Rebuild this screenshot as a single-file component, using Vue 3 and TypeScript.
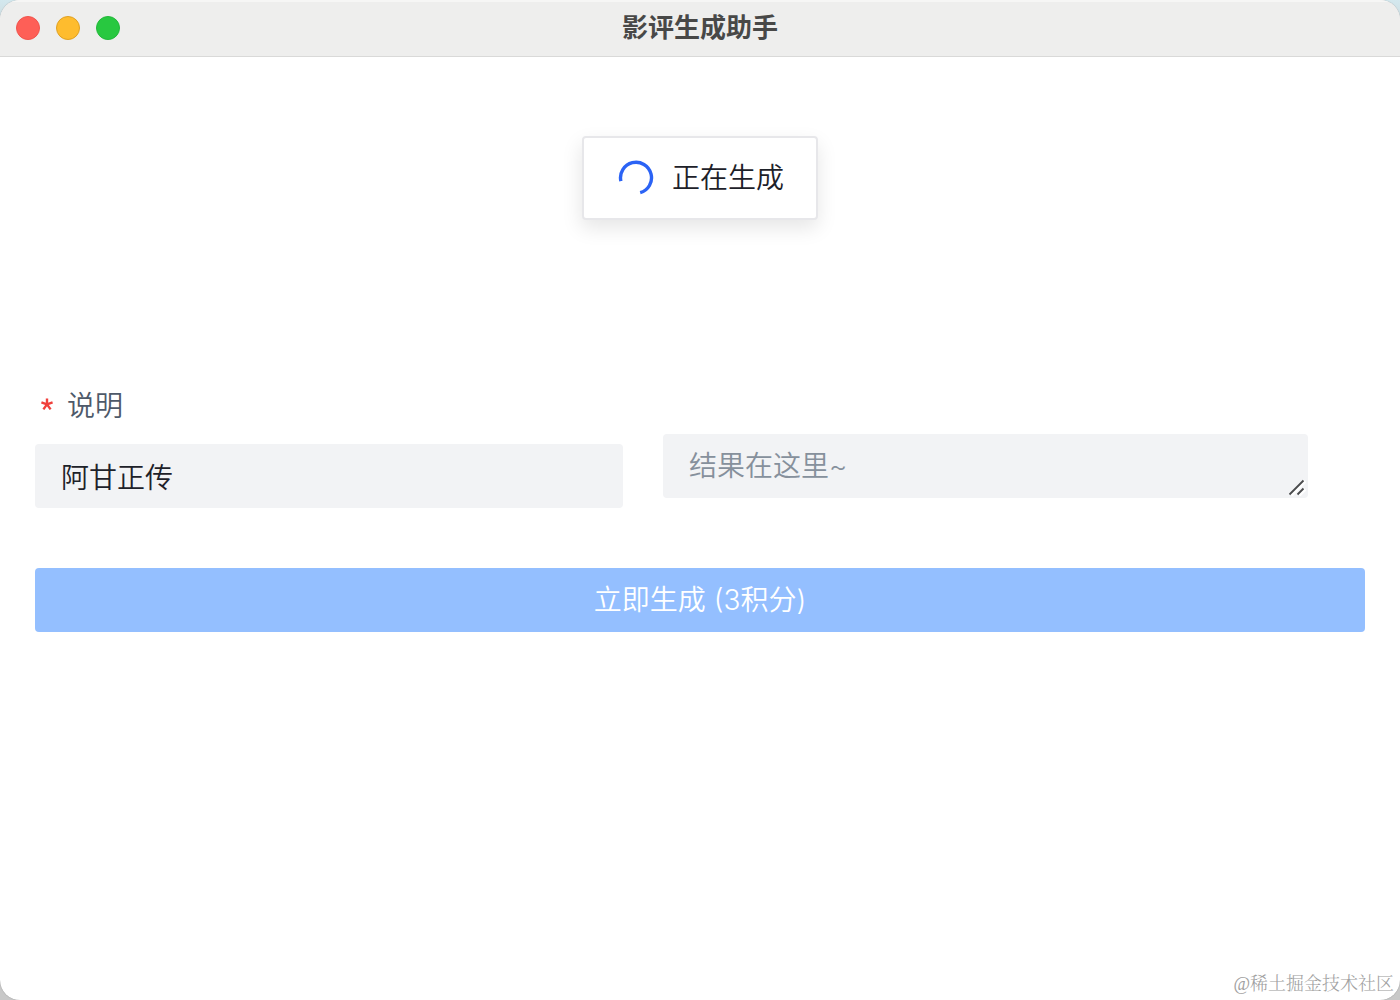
<script setup lang="ts">
import { ref } from 'vue'

const movie = ref<string>('阿甘正传')
const result = ref<string>('')
const generating = ref<boolean>(true)
const cost = 3
</script>

<template>
  <div class="desktop">
    <div class="window">
      <header class="titlebar">
        <div class="lights">
          <button class="light close" type="button" aria-label="关闭"></button>
          <button class="light minimize" type="button" aria-label="最小化"></button>
          <button class="light maximize" type="button" aria-label="最大化"></button>
        </div>
        <h1 class="title">影评生成助手</h1>
      </header>

      <div v-if="generating" class="message" role="status">
        <svg class="spinner" viewBox="0 0 36 36" aria-hidden="true">
          <path d="M2.9 21.2A15.5 15.5 0 1 1 22.2 32.7" fill="none" stroke="#2b63f5" stroke-width="3.4" />
        </svg>
        <span>正在生成</span>
      </div>

      <main class="content">
        <form class="form" @submit.prevent>
          <div class="fields">
            <div class="field">
              <label class="label" for="movie">
                <svg class="required" viewBox="0 0 12 16" aria-hidden="true">
                  <path d="M6 6.4V0.4M6 6.4L11.6 4.4M6 6.4L9.6 11.4M6 6.4L2.4 11.4M6 6.4L0.4 4.4" stroke="#f0403c" stroke-width="2.4" />
                </svg>
                <span>说明</span>
              </label>
              <input id="movie" v-model="movie" class="control" type="text" required />
            </div>
            <div class="result">
              <textarea v-model="result" class="control area" rows="1" placeholder="结果在这里~" aria-label="结果"></textarea>
              <svg class="grip" viewBox="0 0 18 18" aria-hidden="true">
                <path d="M3 17L17 3M11 17L17 11" stroke="#fff" stroke-width="4" />
                <path d="M1.5 16.5L15.5 2.5M9.5 16.5L15.5 10.5" stroke="#4a4b4d" stroke-width="1.8" />
              </svg>
            </div>
          </div>
          <button class="submit" type="submit" :disabled="generating">立即生成 ({{ cost }}积分)</button>
        </form>
      </main>

      <footer class="watermark">@稀土掘金技术社区</footer>
    </div>
  </div>
</template>

<style>
body {
  margin: 0;
}
</style>

<style scoped>
.desktop {
  min-height: 100vh;
  display: flex;
  background: linear-gradient(#d3e8ee 0, #c8c8c8 60px);
  font-family: Inter, "Noto Sans CJK SC", sans-serif;
  font-weight: 350;
  color: #1d2129;
}

.window {
  position: relative;
  flex: 1;
  display: flex;
  flex-direction: column;
  overflow: hidden;
  background: #fff;
  border-radius: 20px;
  box-shadow: 0 0 1px #777;
}

.titlebar {
  display: grid;
  grid-template-columns: 1fr auto 1fr;
  align-items: center;
  box-sizing: border-box;
  height: 57px;
  padding: 0 16px;
  background: #eeeeed;
  border-bottom: 1px solid #d9d9d8;
  box-shadow: inset 0 2px 0 #f6f6f5;
}

.lights {
  display: flex;
  gap: 16px;
}

.light {
  width: 24px;
  height: 24px;
  padding: 0;
  border: 1px solid;
  border-radius: 50%;
}

.close {
  background: #fe5f57;
  border-color: #f0544d;
}

.minimize {
  background: #febc2e;
  border-color: #dfa023;
}

.maximize {
  background: #28c840;
  border-color: #22b83a;
}

.title {
  margin: 0;
  font-size: 26px;
  line-height: 40px;
  font-weight: 700;
  color: #484847;
}

.message {
  position: absolute;
  top: 136px;
  left: 50%;
  transform: translateX(-50%);
  display: flex;
  align-items: center;
  gap: 18px;
  box-sizing: border-box;
  height: 84px;
  padding: 0 32px 0 34px;
  background: #fff;
  border: 2px solid #e7e7ea;
  border-radius: 4px;
  box-shadow: 0 8px 20px rgba(0, 0, 0, 0.1);
  font-size: 28px;
  line-height: 44px;
  white-space: nowrap;
}

.spinner {
  width: 36px;
  height: 36px;
}

.content {
  flex: 1;
  padding: 327px 35px 0;
}

.form {
  display: flex;
  flex-direction: column;
  gap: 60px;
}

.fields {
  display: grid;
  grid-template-columns: 588fr 645fr;
  gap: 40px;
  padding-right: 57px;
}

.field {
  display: flex;
  flex-direction: column;
  gap: 16px;
}

.label {
  display: flex;
  align-items: center;
  gap: 14px;
  padding-left: 6px;
  font-size: 28px;
  line-height: 44px;
  color: #4e5969;
}

.required {
  width: 12px;
  height: 16px;
}

.control {
  display: block;
  box-sizing: border-box;
  width: 100%;
  height: 64px;
  margin: 0;
  padding: 10px 26px;
  border: 0;
  border-radius: 4px;
  outline: none;
  background: #f2f3f5;
  font: inherit;
  font-size: 28px;
  line-height: 44px;
  color: #1d2129;
}

.result {
  position: relative;
  padding-top: 50px;
}

.area {
  resize: none;
  overflow: hidden;
}

.area::placeholder {
  color: #86909c;
  opacity: 1;
}

.grip {
  position: absolute;
  right: 2px;
  bottom: 12px;
  width: 18px;
  height: 18px;
}

.submit {
  height: 64px;
  padding: 0;
  border: 0;
  border-radius: 4px;
  background: #94bfff;
  font: inherit;
  font-size: 28px;
  line-height: 44px;
  color: #fff;
}

.watermark {
  padding: 0 6px 2px;
  text-align: right;
  font-family: "Liberation Serif", "Noto Serif CJK SC", "Noto Sans CJK SC", serif;
  font-size: 18px;
  font-weight: 300;
  line-height: 28px;
  color: #a0a0a0;
}
</style>
